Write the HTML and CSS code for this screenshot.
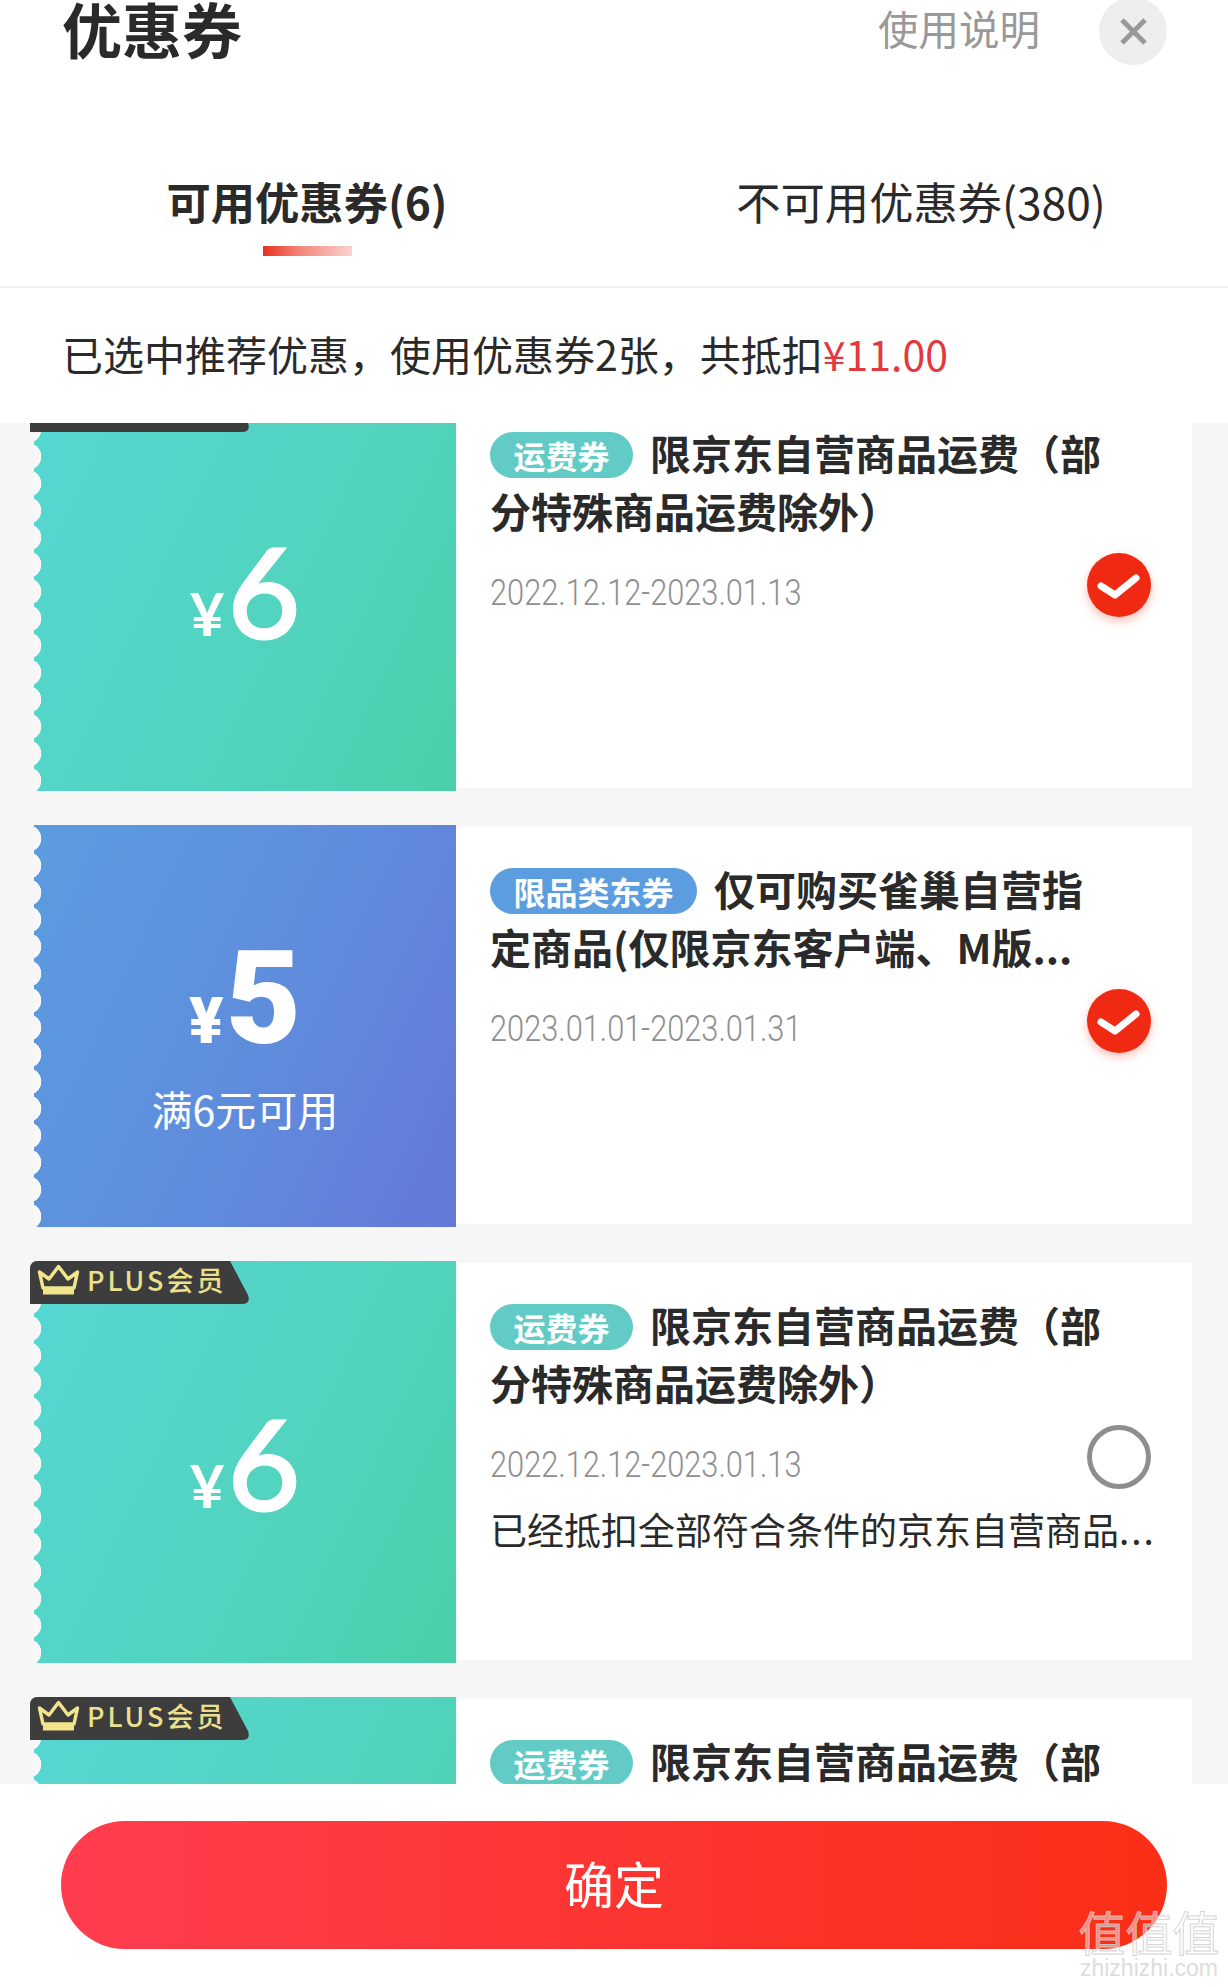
FILE: index.html
```html
<!DOCTYPE html>
<html lang="zh-CN">
<head>
    <meta charset="UTF-8">
    <meta name="viewport" content="width=device-width, initial-scale=1.0">
    <title>优惠券</title>
    <link rel="stylesheet" href="styles.css">
</head>
<body>
    <div class="page">
        <div class="head">
            <div class="head-title">优惠券</div>
            <div class="head-side">
                <span class="head-help">使用说明</span>
                <span class="close">
                    <svg width="27" height="27" viewBox="0 0 27 27" fill="none" stroke="#999999" stroke-width="5"><path d="M2 2l23 23"></path><path d="M25 2L2 25"></path></svg>
                </span>
            </div>
        </div>

        <div class="tabs">
            <div class="tab tab-active">可用优惠券(6)<i class="tab-line"></i></div>
            <div class="tab">不可用优惠券(380)</div>
        </div>

        <div class="summary">已选中推荐优惠，使用优惠券2张，共抵扣<span class="summary-price">¥11.00</span></div>

        <div class="list">
            <div class="coupon">
                <div class="panel panel-green">
                    <div class="plus">
                        <svg class="crown" width="43" height="31" viewBox="0 0 43 31" fill="none" stroke="#f1e48c" stroke-width="3.5" stroke-linejoin="round"><path d="M2.5 8l9.5 7 9.5-12.5L31 15l9.5-7-3.5 16H6z"></path><path d="M6 27h31" stroke-width="7"></path></svg>
                        <span class="plus-text">PLUS会员</span>
                    </div>
                    <div class="amount"><span class="yen">¥</span><span class="num">6</span></div>
                </div>
                <div class="info">
                    <div class="name"><span class="tag tag-green">运费券</span>限京东自营商品运费（部分特殊商品运费除外）</div>
                    <div class="date-row">
                        <span class="date">2022.12.12-2023.01.13</span>
                        <span class="check">
                            <svg width="64" height="64" viewBox="0 0 64 64" fill="none" stroke="#ffffff" stroke-width="7" stroke-linecap="round" stroke-linejoin="round"><path d="M14 33l14 9 21-17"></path></svg>
                        </span>
                    </div>
                </div>
            </div>

            <div class="coupon">
                <div class="panel panel-blue">
                    <div class="amount amount-bold"><span class="yen">¥</span><span class="num">5</span></div>
                    <div class="limit">满6元可用</div>
                </div>
                <div class="info">
                    <div class="name"><span class="tag tag-blue">限品类东券</span>仅可购买雀巢自营指定商品(仅限京东客户端、M版...</div>
                    <div class="date-row">
                        <span class="date">2023.01.01-2023.01.31</span>
                        <span class="check">
                            <svg width="64" height="64" viewBox="0 0 64 64" fill="none" stroke="#ffffff" stroke-width="7" stroke-linecap="round" stroke-linejoin="round"><path d="M14 33l14 9 21-17"></path></svg>
                        </span>
                    </div>
                </div>
            </div>

            <div class="coupon">
                <div class="panel panel-green">
                    <div class="plus">
                        <svg class="crown" width="43" height="31" viewBox="0 0 43 31" fill="none" stroke="#f1e48c" stroke-width="3.5" stroke-linejoin="round"><path d="M2.5 8l9.5 7 9.5-12.5L31 15l9.5-7-3.5 16H6z"></path><path d="M6 27h31" stroke-width="7"></path></svg>
                        <span class="plus-text">PLUS会员</span>
                    </div>
                    <div class="amount"><span class="yen">¥</span><span class="num">6</span></div>
                </div>
                <div class="info">
                    <div class="name"><span class="tag tag-green">运费券</span>限京东自营商品运费（部分特殊商品运费除外）</div>
                    <div class="date-row">
                        <span class="date">2022.12.12-2023.01.13</span>
                        <span class="check check-off"></span>
                    </div>
                    <div class="note">已经抵扣全部符合条件的京东自营商品<span class="dots">...</span></div>
                </div>
            </div>

            <div class="coupon">
                <div class="panel panel-green">
                    <div class="plus">
                        <svg class="crown" width="43" height="31" viewBox="0 0 43 31" fill="none" stroke="#f1e48c" stroke-width="3.5" stroke-linejoin="round"><path d="M2.5 8l9.5 7 9.5-12.5L31 15l9.5-7-3.5 16H6z"></path><path d="M6 27h31" stroke-width="7"></path></svg>
                        <span class="plus-text">PLUS会员</span>
                    </div>
                </div>
                <div class="info">
                    <div class="name"><span class="tag tag-green">运费券</span>限京东自营商品运费（部分特殊商品运费除外）</div>
                </div>
            </div>
        </div>

        <div class="footer">
            <button class="confirm">确定</button>
            <div class="watermark">
                <div class="watermark-logo">值值值</div>
                <div class="watermark-url">zhizhizhi.com</div>
            </div>
        </div>
    </div>
</body>
</html>
```

FILE: styles.css
```css
:root {
    --bg: #f6f6f6;
    --text: #2a2a2a;
    --muted: #999999;
    --red: #e4393c;
    --cjk: "Noto Sans CJK SC", "Noto Sans", sans-serif;
}

html,
body {
    margin: 0;
    padding: 0;
}

.page {
    position: relative;
    width: 1228px;
    height: 1987px;
    display: flex;
    flex-direction: column;
    overflow: hidden;
    background: #ffffff;
    color: var(--text);
    font-family: var(--cjk);
}

/* header */
.head {
    height: 62px;
    padding: 0 61px 0 62px;
    display: flex;
    justify-content: space-between;
    align-items: center;
}

.head-title {
    margin-bottom: 6px;
    font-size: 60px;
    font-weight: 700;
    line-height: 62px;
}

.head-side {
    display: flex;
    align-items: center;
    gap: 59px;
}

.head-help {
    margin-bottom: 6px;
    font-size: 40.5px;
    line-height: 62px;
    color: var(--muted);
}

.close {
    width: 68px;
    height: 68px;
    border-radius: 50%;
    background: #eeeeee;
    display: flex;
    align-items: center;
    justify-content: center;
}

/* tabs */
.tabs {
    height: 224px;
    display: grid;
    grid-template-columns: 1fr 1fr;
    border-bottom: 2px solid #f2f2f2;
}

.tab {
    padding-top: 109px;
    font-size: 44.3px;
    line-height: 60px;
    text-align: center;
}

.tab-active {
    font-weight: 700;
}

.tab-line {
    display: block;
    width: 89px;
    height: 10px;
    margin: 15px auto 0;
    background: linear-gradient(90deg, #e8321c 0%, #f4837a 40%, #f8d4d0 100%);
}

/* summary */
.summary {
    height: 129px;
    padding: 0 0 6px 62px;
    display: flex;
    align-items: center;
    font-size: 41px;
}

.summary-price {
    color: var(--red);
}

/* coupons */
.list {
    height: 1361px;
    flex: none;
    overflow: hidden;
    background: var(--bg);
    padding: 0 36px 0 34px;
}

.coupon {
    display: flex;
    height: 402px;
    margin-bottom: 34px;
}

.coupon:first-child {
    margin-top: -34px;
}

.panel {
    position: relative;
    width: 422px;
    flex: none;
    box-sizing: border-box;
    display: flex;
    flex-direction: column;
    align-items: center;
    justify-content: center;
    color: #ffffff;
}

/* scalloped left edge */
.panel::before {
    content: "";
    position: absolute;
    left: 0;
    top: 0;
    bottom: 0;
    width: 8px;
    background: radial-gradient(circle at -6px 13.5px, #f8f8f8 13px, rgba(248, 248, 248, 0) 13.6px) 0 0 / 8px 27px repeat-y;
}

.panel-green {
    background: linear-gradient(115deg, #56d6d2 0%, #52d4c0 55%, #4acfa9 100%);
}

.panel-blue {
    padding-top: 12px;
    background: linear-gradient(115deg, #5b9ce0 0%, #5f8cdc 55%, #6478d8 100%);
}

.plus {
    position: absolute;
    left: -4px;
    top: 0;
    width: 219px;
    height: 43px;
    display: flex;
    align-items: flex-start;
    background: #3d3d3d;
    clip-path: path("M8 0H200L218 34Q221 43 212 43H0V8Q0 0 8 0Z");
}

.crown {
    margin: 3px 7px 0;
    flex: none;
}

.plus-text {
    font-size: 27px;
    font-weight: 500;
    line-height: 37px;
    letter-spacing: 3px;
    white-space: nowrap;
    color: #ece08e;
}

.amount {
    display: flex;
    align-items: baseline;
    font-family: "Lato", sans-serif;
    line-height: 135px;
    height: 135px;
}

.yen {
    position: relative;
    top: -2px;
    font-size: 60px;
    font-weight: 700;
    margin-right: 3px;
}

.num {
    font-size: 125px;
    font-weight: 400;
    -webkit-text-stroke: 3px #ffffff;
}

.amount-bold {
    font-family: "Roboto", sans-serif;
}

.amount-bold .yen {
    top: 0;
    font-size: 64px;
    font-weight: 900;
    margin-right: 2px;
}

.amount-bold .num {
    font-size: 130px;
    font-weight: 900;
    -webkit-text-stroke: 0;
}

.limit {
    margin-top: 17px;
    font-size: 41px;
    line-height: 50px;
}

.info {
    flex: 1;
    margin: 2px 0 3px;
    padding: 32px 0 0 34px;
    background: #ffffff;
    overflow: hidden;
}

.name {
    width: 620px;
    font-size: 41px;
    font-weight: 700;
    line-height: 58px;
}

.tag {
    display: inline-block;
    height: 46px;
    margin-right: 17px;
    padding: 0 23.5px;
    border-radius: 23px;
    font-size: 32px;
    line-height: 46px;
    color: #ffffff;
    vertical-align: 1px;
}

.tag-green {
    background: #62cbc6;
}

.tag-blue {
    background: #5b9ddf;
}

.date-row {
    width: 661px;
    height: 64px;
    margin-top: 14px;
    display: flex;
    justify-content: space-between;
    align-items: center;
}

.date {
    padding-top: 16px;
    font-family: "Roboto", sans-serif;
    font-size: 36px;
    font-weight: 300;
    color: #8f8f8f;
    white-space: nowrap;
    transform: scaleX(0.855);
    transform-origin: left center;
}

.check {
    width: 64px;
    height: 64px;
    flex: none;
    border-radius: 50%;
    background: #f02a12;
    box-shadow: 0 4px 10px rgba(240, 42, 18, 0.3);
}

.check svg {
    display: block;
}

.check-off {
    box-sizing: border-box;
    background: #ffffff;
    border: 5px solid #8e8e8e;
    box-shadow: none;
}

.note {
    margin-top: 15px;
    font-size: 37px;
    line-height: 50px;
    white-space: nowrap;
}

.dots {
    letter-spacing: 2px;
}

/* footer */
.footer {
    flex: 1;
    padding: 37px 61px 0 61px;
    background: #ffffff;
}

.confirm {
    display: block;
    width: 100%;
    height: 128px;
    padding: 0 0 6px;
    border: none;
    border-radius: 64px;
    background: linear-gradient(90deg, #ff3d4f 0%, #fb2e16 100%);
    color: #ffffff;
    font-family: var(--cjk);
    font-size: 50px;
}

.watermark {
    position: absolute;
    right: 8px;
    bottom: 8px;
    width: 142px;
    text-align: center;
}

.watermark-logo {
    font-size: 47px;
    line-height: 52px;
    color: rgba(255, 255, 255, 0.45);
    -webkit-text-stroke: 1px rgba(205, 205, 205, 0.85);
}

.watermark-url {
    font-family: "Liberation Sans", sans-serif;
    font-size: 23px;
    line-height: 22px;
    color: #dddddd;
}
```
